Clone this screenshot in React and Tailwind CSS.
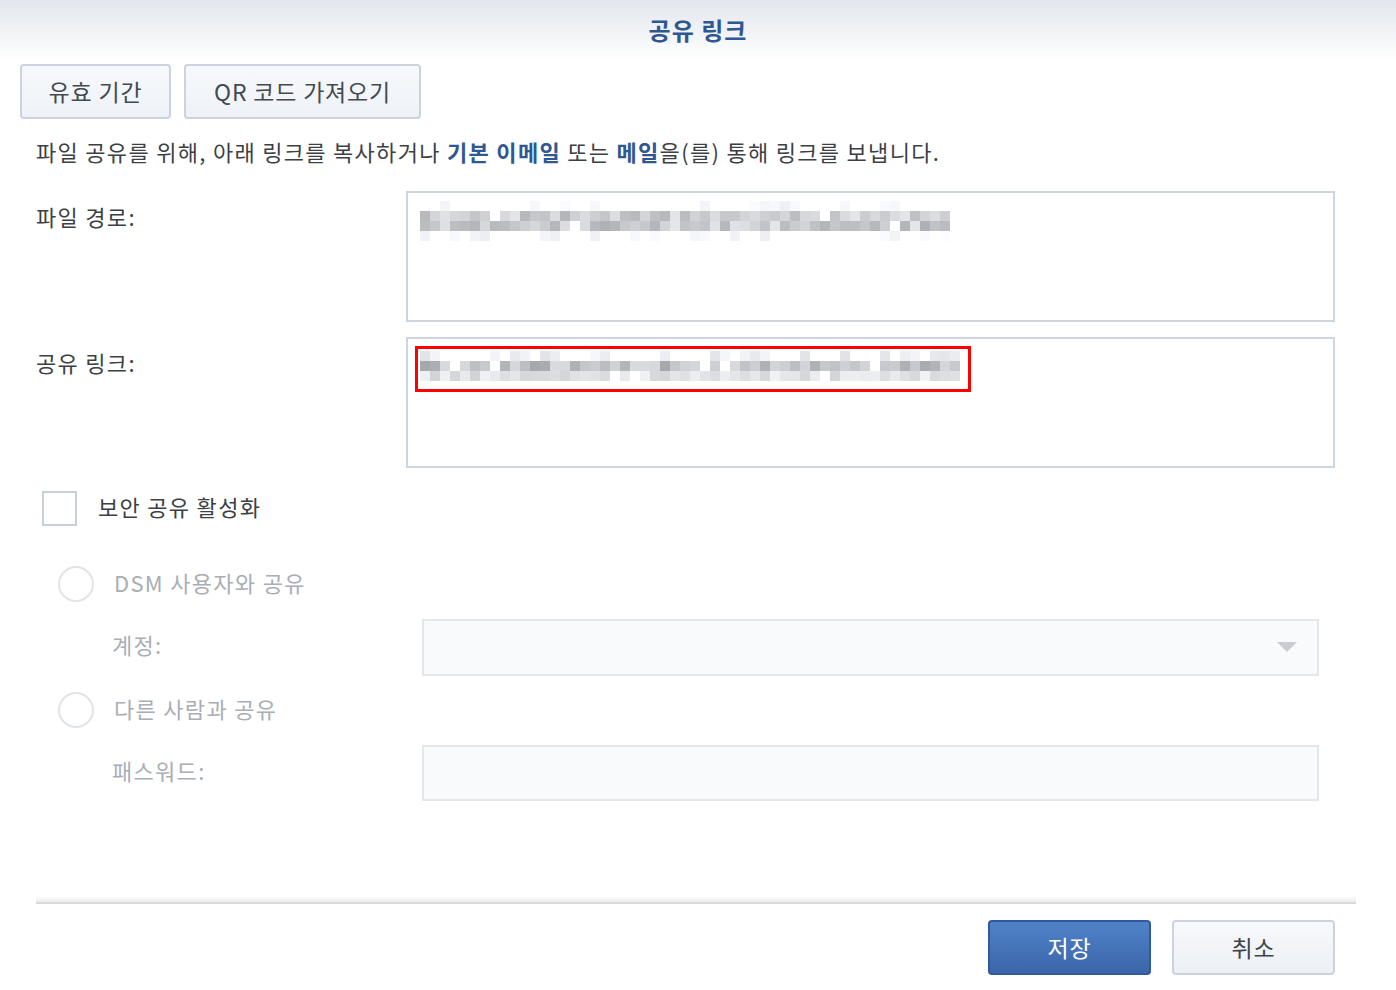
import React from "react";

const FONT = { fontFamily: '"Noto Sans CJK KR", "Noto Sans", sans-serif' };

function makeRand(seed) {
  let s = seed;
  return () => {
    s = (s * 1103515245 + 12345) % 2147483648;
    return s / 2147483648;
  };
}

function Pixelated({ cols, rows, seed, profile }) {
  const rand = makeRand(seed);
  const cells = [];
  for (let r = 0; r < rows; r++) {
    for (let c = 0; c < cols; c++) {
      const p = rand();
      const [lo, hi, blank] = profile[r];
      let color = "transparent";
      if (p > blank) {
        const v = Math.round(lo + rand() * (hi - lo));
        color = `rgb(${v},${v + 2},${v + 5})`;
      } else {
        rand();
      }
      cells.push(
        <div key={r + "-" + c} className="w-[10px] h-[10px]" style={{ backgroundColor: color }} />
      );
    }
  }
  return (
    <div className="flex flex-wrap" style={{ width: cols * 10 }}>
      {cells}
    </div>
  );
}

function App() {
  return (
    <div className="w-[1396px] h-[990px] bg-white text-[#3b3b3b] overflow-hidden" style={FONT}>
      {/* Header */}
      <div className="h-[60px] flex items-center justify-center bg-gradient-to-b from-[#e2e6ed] to-white">
        <span className="text-[24px] font-bold text-[#2f5791] tracking-[1px]">공유 링크</span>
      </div>

      {/* Tab buttons */}
      <div className="flex gap-[13px] pl-[20px] mt-[4px]">
        <button className="h-[55px] w-[151px] rounded-[4px] border-2 border-[#cad3de] bg-gradient-to-b from-[#f7f9fc] to-[#eef2f7] text-[23px] tracking-[0.8px] text-[#444a52]">
          유효 기간
        </button>
        <button className="h-[55px] w-[237px] rounded-[4px] border-2 border-[#cad3de] bg-gradient-to-b from-[#f7f9fc] to-[#eef2f7] text-[23px] tracking-[0.8px] text-[#444a52]">
          QR 코드 가져오기
        </button>
      </div>

      {/* Description */}
      <div className="pl-[36px] mt-[16px] h-[32px] flex items-center text-[22px] tracking-[1.3px] text-[#3c3f44]">
        <span>
          파일 공유를 위해, 아래 링크를 복사하거나 <b className="text-[#2f5791]">기본 이메일</b> 또는{" "}
          <b className="text-[#2f5791]">메일</b>을(를) 통해 링크를 보냅니다.
        </span>
      </div>

      {/* File path */}
      <div className="flex pl-[36px] mt-[24px]">
        <div className="w-[370px] pt-[9px] text-[22px] tracking-[1.3px] text-[#3c3f44]">파일 경로:</div>
        <div className="w-[929px] h-[131px] border-2 border-[#cdd6e0] bg-white pl-[12px] pt-[8px]">
          <Pixelated
            cols={53}
            rows={4}
            seed={17}
            profile={[
              [238, 250, 0.75],
              [180, 228, 0.06],
              [175, 228, 0.04],
              [236, 250, 0.8],
            ]}
          />
        </div>
      </div>

      {/* Share link */}
      <div className="flex pl-[36px] mt-[15px]">
        <div className="w-[370px] pt-[9px] text-[22px] tracking-[1.3px] text-[#3c3f44]">공유 링크:</div>
        <div className="w-[929px] h-[131px] border-2 border-[#cdd6e0] bg-white pl-[7px] pt-[7px]">
          <div className="w-[556px] h-[46px] border-[3px] border-[#ff0000] pl-[2px] pt-[2px]">
            <Pixelated
              cols={54}
              rows={3}
              seed={91}
              profile={[
                [225, 245, 0.6],
                [165, 218, 0.07],
                [208, 240, 0.05],
              ]}
            />
          </div>
        </div>
      </div>

      {/* Secure share checkbox */}
      <div className="flex items-center pl-[42px] mt-[23px]">
        <div className="w-[35px] h-[35px] border-2 border-[#c8cfd9] bg-white" />
        <span className="ml-[21px] -translate-y-[2px] text-[22px] tracking-[1.3px] text-[#3c3f44]">보안 공유 활성화</span>
      </div>

      {/* DSM user radio */}
      <div className="flex items-center pl-[58px] mt-[40px]">
        <div className="w-[36px] h-[36px] rounded-full border-2 border-[#e0e4e9] bg-white" />
        <span className="ml-[20px] -translate-y-[2px] text-[22px] tracking-[1.3px] text-[#a9aeb5]">DSM 사용자와 공유</span>
      </div>

      {/* Account */}
      <div className="flex items-center pl-[112px] mt-[17px]">
        <div className="w-[310px] -translate-y-[3px] text-[22px] tracking-[1.3px] text-[#a9aeb5]">계정:</div>
        <div className="w-[897px] h-[57px] border-2 border-[#e3e6eb] bg-[#f9fafc] flex items-center justify-end pr-[20px]">
          <svg width="20" height="11" viewBox="0 0 20 11">
            <polygon points="0,0 20,0 10,10" fill="#c9ccd2" />
          </svg>
        </div>
      </div>

      {/* Other people radio */}
      <div className="flex items-center pl-[58px] mt-[16px]">
        <div className="w-[36px] h-[36px] rounded-full border-2 border-[#e0e4e9] bg-white" />
        <span className="ml-[20px] -translate-y-[2px] text-[22px] tracking-[1.3px] text-[#a9aeb5]">다른 사람과 공유</span>
      </div>

      {/* Password */}
      <div className="flex items-center pl-[112px] mt-[17px]">
        <div className="w-[310px] -translate-y-[3px] text-[22px] tracking-[1.3px] text-[#a9aeb5]">패스워드:</div>
        <div className="w-[897px] h-[56px] border-2 border-[#e3e6eb] bg-[#f9fafc]" />
      </div>

      {/* Separator */}
      <div className="ml-[36px] w-[1320px] h-[8px] mt-[95px] bg-gradient-to-b from-white to-[#ebebeb] border-b-2 border-[#d9d9d9]" />

      {/* Footer buttons */}
      <div className="flex justify-end gap-[21px] pr-[61px] mt-[16px]">
        <button className="w-[163px] h-[55px] rounded-[4px] border-2 border-[#2f5b9c] bg-gradient-to-b from-[#4f82c8] to-[#3b66a9] text-white text-[23px] tracking-[0.8px]">
          저장
        </button>
        <button className="w-[163px] h-[55px] rounded-[4px] border-2 border-[#cad3de] bg-gradient-to-b from-[#f7f9fc] to-[#eceff4] text-[#3f444b] text-[23px] tracking-[0.8px]">
          취소
        </button>
      </div>
    </div>
  );
}

export default App;
